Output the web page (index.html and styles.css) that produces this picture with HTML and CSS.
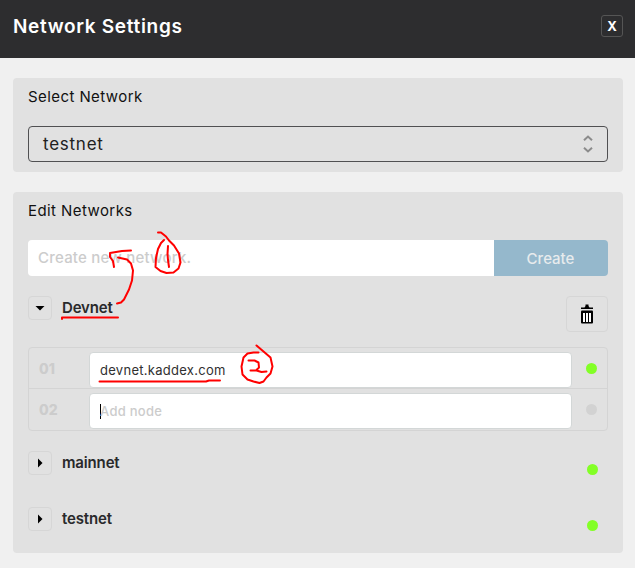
FILE: index.html
```html
<!DOCTYPE html>
<html lang="en">
<head>
<meta charset="utf-8">
<title>Network Settings</title>
<link rel="stylesheet" href="styles.css">
</head>
<body>
<header class="header">
  <h1 class="title">Network Settings</h1>
  <button class="close">X</button>
</header>
<main class="content">
  <section class="panel">
    <h2 class="label">Select Network</h2>
    <div class="select">
      <span class="select-value">testnet</span>
      <svg class="select-arrows" width="10" height="20" viewBox="0 0 10 20"><path d="M1 6.300L5 2.600 9 6.300M1 13.700L5 17.400 9 13.700"/></svg>
    </div>
  </section>
  <section class="panel panel-edit">
    <h2 class="label">Edit Networks</h2>
    <div class="create-row">
      <div class="create-input"><span class="create-hint">Create new network.</span></div>
      <button class="create-button"><span class="create-text">Create</span></button>
    </div>
    <div class="network network-open">
      <button class="toggle"><svg width="10" height="10" viewBox="0 0 10 10"><path d="M.5 3h9L5 7.500z"/></svg></button>
      <span class="name">Devnet</span>
      <button class="trash"><svg width="14" height="20" viewBox="0 0 14 20"><path d="M1 3.500h3.500L5.500 2V.5h3V2l1 1.500H13V5H1z"/><rect x="1" y="6.500" width="12" height="13" rx="1"/><path class="trash-slots" d="M3 9h2v9H3zM6 9h2v9H6zM9 9h2v9H9z"/></svg></button>
    </div>
    <div class="nodes">
      <div class="node">
        <span class="number">01</span>
        <div class="node-input"><span class="node-value">devnet.kaddex.com</span></div>
        <span class="dot"></span>
      </div>
      <div class="node">
        <span class="number">02</span>
        <div class="node-input"><i class="caret"></i><span class="node-hint">Add node</span></div>
        <span class="dot dot-off"></span>
      </div>
    </div>
    <div class="network">
      <button class="toggle"><svg width="10" height="10" viewBox="0 0 10 10"><path d="M3 .5v9L7.500 5z"/></svg></button>
      <span class="name">mainnet</span>
      <span class="dot"></span>
    </div>
    <div class="network">
      <button class="toggle"><svg width="10" height="10" viewBox="0 0 10 10"><path d="M3 .5v9L7.500 5z"/></svg></button>
      <span class="name">testnet</span>
      <span class="dot"></span>
    </div>
  </section>
</main>
<svg class="ink" width="635" height="568" viewBox="0 0 635 568">
  <path d="M158 232.500h3l5 4 3 4 5 5 5 8 1.500 9-2 6-5 4-7 .5-6-2-5-4 .5-9 2-9 3-6 3-3"/>
  <path d="M168 246l-.5 8 .5 6 1 7"/>
  <path d="M131 250.500l-9 .5-12 2v4l3 4 1 6"/>
  <path d="M118 257.500l9 2 4 4 2 7-1 10-3 9-5 10-3 3-4 1"/>
  <path d="M62 319v-1.500h56"/>
  <path d="M99.500 381.500H206l3-1h11"/>
  <path d="M256.500 345.500l7 6 7 6 2 9-2 7-4 4-3 4-4 1.500-6-1.500-6-2-5-5-1-8 2-9 4-4 6-1 5 0"/>
  <path d="M248.500 360.500h6l4 2 .5 5-3 3M250.500 370.500h6l5 1.500 5-.5"/>
</svg>
</body>
</html>
```

FILE: styles.css
```css
* { box-sizing: border-box; }
body { margin: 0; height: 568px; overflow: hidden; background: #f0f0f0; color: #202020; font-family: Inter, "Liberation Sans", sans-serif; }
button { padding: 0; margin: 0; background: none; font-family: inherit; }
.header { height: 58px; background: #2d2d2f; display: flex; justify-content: space-between; align-items: flex-start; padding: 15px 12px 0 13px; }
.title { margin: 0; color: #fff; font-size: 19px; line-height: 23px; font-weight: 600; letter-spacing: .68px; white-space: nowrap; }
.close { width: 22px; height: 22px; border: 1px solid #555; border-radius: 3px; color: #fff; font-size: 13px; line-height: 20px; font-weight: 700; }
.content { padding: 20px 12px 0 13px; display: flex; flex-direction: column; gap: 20px; }
.panel { height: 94px; background: #e1e1e1; border-radius: 4px; padding: 9px 15px 0; }
.panel-edit { height: 361px; }
.label { margin: 0 0 19px; font-size: 15px; line-height: 20px; font-weight: 400; color: #111; letter-spacing: .42px; }
.select { height: 36px; border: 1px solid #505052; border-radius: 4px; padding: 0 14px; display: flex; align-items: center; justify-content: space-between; font-size: 17px; letter-spacing: .75px; }
.select-arrows { fill: none; stroke: #8b8b8b; stroke-width: 2; }
.create-row { display: flex; height: 36px; margin-bottom: 20px; font-size: 15px; }
.create-input { flex: 1; background: #fff; border-radius: 4px 0 0 4px; padding-left: 10px; line-height: 36px; color: #ccc; font-weight: 500; letter-spacing: .22px; white-space: nowrap; }
.create-button { width: 114px; border: 0; border-radius: 0 4px 4px 0; background: #95b8cc; color: #e7ebed; font-size: 15px; font-weight: 500; padding-right: 1px; }
.network { display: flex; height: 24px; align-items: center; margin-bottom: 32px; }
.network-open { height: 36px; align-items: flex-start; margin-bottom: 15px; }
.toggle { width: 24px; height: 24px; border: 1px solid #d6d6d6; border-radius: 4px; display: flex; align-items: center; justify-content: center; margin-right: 10px; }
.name { flex: 1; font-size: 15px; line-height: 24px; font-weight: 600; color: #29292b; letter-spacing: -.15px; }
.trash { width: 42px; height: 36px; border: 1px solid #d6d6d6; border-radius: 4px; display: flex; align-items: center; justify-content: center; }
.trash-slots { fill: #fff; }
.nodes { height: 84px; border: 1px solid #d4d4d4; border-radius: 4px; margin-bottom: 20px; }
.node { height: 40px; display: flex; padding: 4px 10px 0; }
.node + .node { height: 42px; border-top: 1px solid #d4d4d4; }
.number { width: 50px; font-size: 14px; line-height: 34px; font-weight: 800; color: #ccc; }
.node-input { width: 483px; height: 36px; background: #fff; border: 1px solid #d3d7d7; border-radius: 4px; padding-left: 10px; display: flex; align-items: center; font-size: 13px; color: #303030; letter-spacing: .28px; margin-right: 14px; white-space: nowrap; }
.node-value, .node-hint { margin-top: -1px; }
.node-hint { color: #ccc; font-weight: 500; }
.caret { width: 1px; height: 15px; background: #000; margin-right: -1px; }
.dot { width: 11px; height: 11px; border-radius: 50%; background: #83ff26; }
.node .dot { margin-top: 11px; }
.network .dot { margin: 13px 10px 0 0; }
.dot.dot-off { background: #d2d2d2; }
.ink { position: absolute; left: 0; top: 0; fill: none; stroke: #f00; stroke-width: 2; stroke-linecap: round; stroke-linejoin: round; pointer-events: none; }
```
